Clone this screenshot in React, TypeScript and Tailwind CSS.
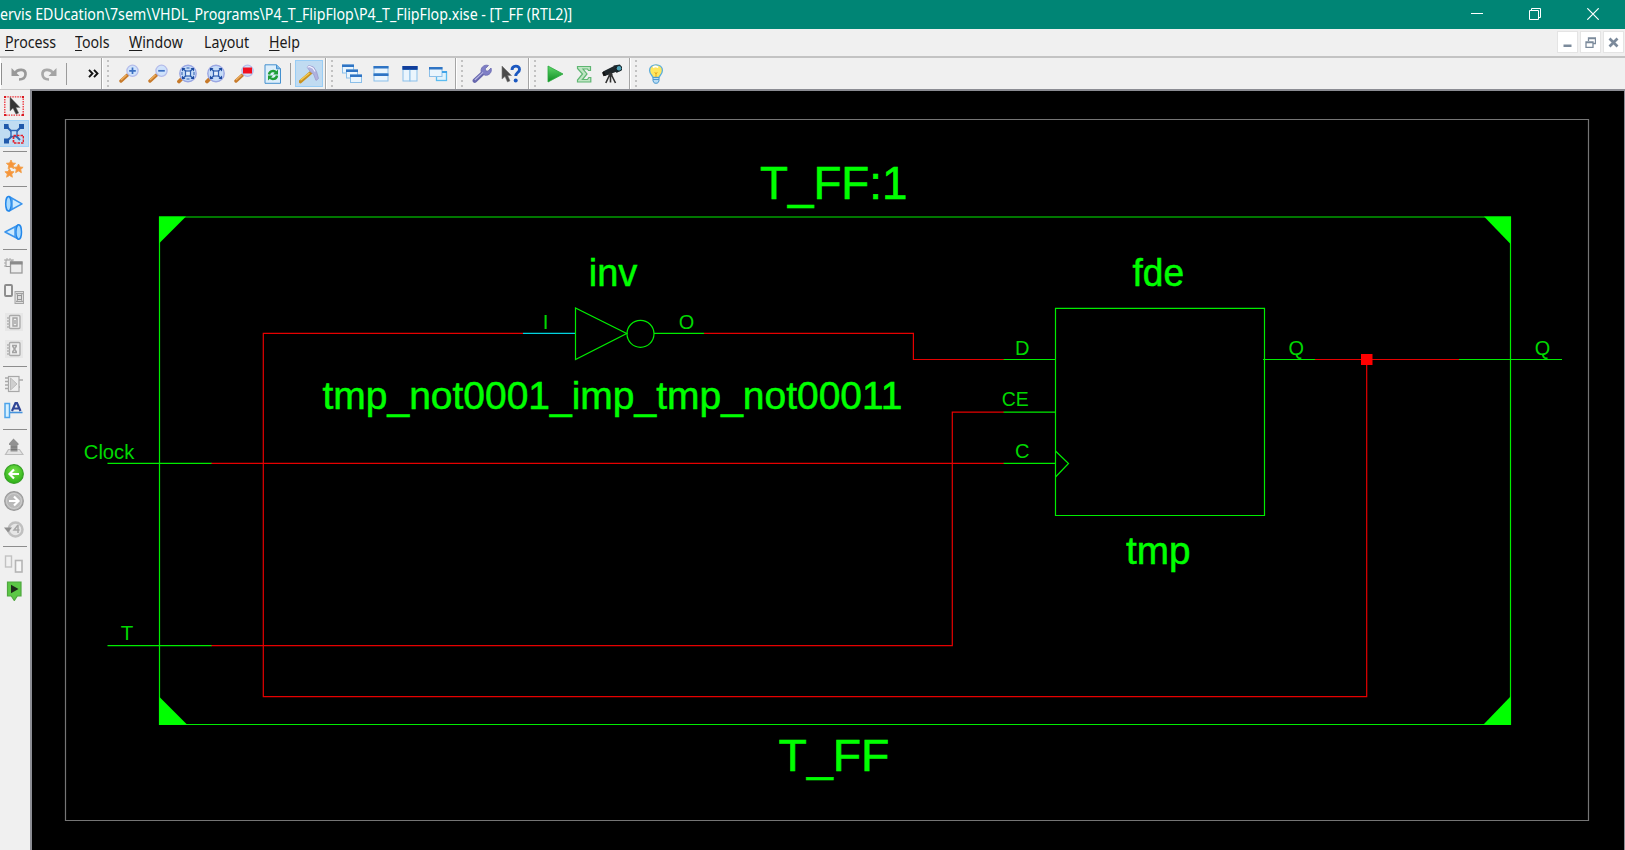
import type { ReactNode } from "react";

/* ---------- shared bits ---------- */

function Icon({ children, size = 20 }: { children: ReactNode; size?: number }) {
  return (
    <svg width={size} height={size} viewBox="0 0 20 20" fill="none" className="block shrink-0">
      {children}
    </svg>
  );
}

function Cell({ children, active = false }: { children: ReactNode; active?: boolean }) {
  return (
    <div
      className={
        active
          ? "flex h-[27px] w-[28px] items-center justify-center border border-[#99cdf5] bg-[#c0dbf1]"
          : "flex h-[27px] w-[28.7px] items-center justify-center"
      }
    >
      {children}
    </div>
  );
}

function Grip() {
  return (
    <div className="flex h-full w-[12px] shrink-0 flex-col items-center justify-center gap-[3px]">
      {[0, 1, 2, 3, 4, 5].map((i) => (
        <span key={i} className="h-[2px] w-[2px] bg-[#c2c2c2]" />
      ))}
    </div>
  );
}

function Section({ width, children }: { width: string; children: ReactNode }) {
  return (
    <div className={`flex h-full shrink-0 items-center border-r border-[#a5a5a5] shadow-[inset_1px_0_0_#ffffff] ${width}`}>
      {children}
    </div>
  );
}

/* ---------- toolbar icons ---------- */

function Lens({ children }: { children?: ReactNode }) {
  return (
    <Icon>
      <path d="M2 17 8.500 11" stroke="#c77a2a" strokeWidth="3.400" strokeLinecap="round" />
      <path d="M2 16 7.500 11" stroke="#eeb05e" strokeWidth="1.200" />
      <circle cx="13.500" cy="6.800" r="5.600" fill="#cfe2fb" stroke="#b4bcea" strokeWidth="1.300" />
      {children}
    </Icon>
  );
}

function FitLens({ dense = false }: { dense?: boolean }) {
  return (
    <Icon>
      <path d="M2 17.500 5 14.500" stroke="#c77a2a" strokeWidth="3.800" strokeLinecap="round" />
      <circle cx="11" cy="9.500" r="8.200" fill="#c6dcf8" stroke="#9aa6e2" strokeWidth="1.400" />
      <path d="M6 4.500 16 14.500M16 4.500 6 14.500" stroke="#2f5fb0" strokeWidth="1.400" />
      <rect x="8.500" y="7" width="5" height="5" fill="#e3effc" stroke="#2f5fb0" strokeWidth="1.200" />
      <path d="M5 4h3.500L5 7.500zM17 4h-3.500L17 7.500zM5 15h3.500L5 11.500zM17 15h-3.500l3.500-3.500z" fill="#1d4c9f" />
      {!dense && <path d="M5 8v3M17 8v3M9.500 4h3M9.500 15h3" stroke="#2f5fb0" />}
    </Icon>
  );
}

const Undo = () => (
  <Icon>
    <path d="M5.500 9.500C9 4 17 5 16.500 10.500C16.200 14 13.500 15.500 10 15.500" stroke="#999" strokeWidth="2.700" />
    <path d="M2.500 4v8h8z" fill="#999" />
  </Icon>
);
const Redo = () => (
  <Icon>
    <path d="M14.500 9.500C11 4 3 5 3.500 10.500C3.800 14 6.500 15.500 10 15.500" stroke="#a8a8a8" strokeWidth="2.700" />
    <path d="M17.500 4v8h-8z" fill="#a3a3a3" />
  </Icon>
);
const Refresh = () => (
  <Icon>
    <path d="M2 .800h11.500l4 4v14.500H2z" fill="#dceefb" stroke="#4591cf" />
    <path d="M13.500.800v4h4" fill="#7fb7e6" stroke="#4591cf" />
    <path d="M6 10.500c.5-4 5.500-4.500 7-2M14 11.500c-.5 4-5.500 4.500-7 2" stroke="#1f9e38" strokeWidth="2.400" />
    <path d="M15 5.500v5h-5zM5 16.500v-5h5z" fill="#1f9e38" />
  </Icon>
);
const Hammer = () => (
  <Icon>
    <path d="M1.500 17.500 12 8.500" stroke="#c9921f" strokeWidth="3.600" strokeLinecap="round" />
    <path d="M1.500 16.300 10.500 9" stroke="#f3cc55" strokeWidth="1.300" />
    <path d="M8 3 10 1.500 14.500 3 17.500 7.500 19.500 14.500 17 16.500 14.500 10 11.500 8z" fill="#b0b2de" stroke="#9a9acb" strokeWidth=".8" />
    <path d="M8.500 3.200 10.500 2.400 14 4.200l2 3.300" stroke="#f2f2ff" strokeWidth="1.200" />
  </Icon>
);

function Win({ x, y, w, h, title = 2.5, fill = "#eaf5fd" }: { x: number; y: number; w: number; h: number; title?: number; fill?: string }) {
  return (
    <g>
      <rect x={x + 0.5} y={y + 0.5} width={w - 1} height={h - 1} fill={fill} stroke="#8bbfe9" />
      <rect x={x} y={y} width={w} height={title} fill="#2f74c4" />
    </g>
  );
}

const Cascade = () => (
  <Icon>
    <Win x={0} y={0.5} w={12} h={9} />
    <Win x={4} y={5.5} w={12} h={9} />
    <Win x={8} y={10.5} w={12} h={8.5} />
  </Icon>
);
const TileH = () => (
  <Icon>
    <Win x={2.5} y={2} w={15} h={8} />
    <Win x={2.5} y={9.5} w={15} h={8} />
  </Icon>
);
const TileV = () => (
  <Icon>
    <Win x={2.5} y={2} w={8} h={15.5} title={4} />
    <Win x={9.5} y={2} w={8} h={15.5} title={4} />
    <path d="M2.500 2h15v3.500h-15z" fill="#123e9b" />
  </Icon>
);
const Layer = () => (
  <Icon>
    <rect x="8.500" y="8" width="10" height="8.500" fill="#dff3fd" stroke="#5bbcf0" strokeWidth="1.300" />
    <Win x={1} y={3} w={13.5} h={10} />
    <path d="M14 8h5" stroke="#42a4e8" strokeWidth="2" />
  </Icon>
);
const Wrench = () => (
  <Icon>
    <path d="M2.800 16.700 11 9" stroke="#6767ad" strokeWidth="4.400" strokeLinecap="round" />
    <path d="M16.500 1.500 13.200 4.800l.5 2 2.300.400 3-3.200c1.500 4-2 8-6 7.200L9.500 9C7.500 4 12 0 16.500 1.500z" fill="#7f7fc6" stroke="#6a6ab0" strokeWidth=".8" />
    <path d="M2.800 16 11 8.400" stroke="#b4b4e4" strokeWidth="1.200" />
  </Icon>
);
const WhatsThis = () => (
  <Icon>
    <path d="M1 2v13l3-2.500 2.500 5.500 2.500-1.200L6.700 11.500H10.500z" fill="#4a4a4a" stroke="#777" strokeWidth=".6" />
    <path d="M11 6c0-5 7.500-5 7.500-.6C18.500 8.500 14.700 8.500 14.700 12" stroke="#1b58c0" strokeWidth="2.900" />
    <circle cx="14.700" cy="16.500" r="2" fill="#1b58c0" />
  </Icon>
);
const Play = () => (
  <Icon>
    <defs>
      <linearGradient id="play" x1="0" y1="0" x2="0" y2="1">
        <stop offset="0" stopColor="#5fd66b" />
        <stop offset="1" stopColor="#0e8d22" />
      </linearGradient>
    </defs>
    <path d="M3 2 18 10 3 18z" fill="url(#play)" stroke="#2aa83c" strokeWidth=".8" />
  </Icon>
);
const Sigma = () => (
  <Icon>
    <path d="M3.500 2.500h13v4h-2l-1-1.500H9l4 5-4.500 5.500h5l1.300-2h2v4.500H3.500v-2l5-6-5-5.500z" fill="#bfe5c3" stroke="#5fb672" strokeWidth="1.200" />
  </Icon>
);
const Scope = () => (
  <Icon>
    <path d="M1 7.500 12 2l3 5.500L3 12z" fill="#20272b" />
    <path d="m0 8.500 2-1 1.800 4-2.300.8z" fill="#111" />
    <path d="M11.500 1.500 18 .5l1.800 5.500-5.300 3z" fill="#1b2429" />
    <circle cx="17" cy="4.300" r="2.800" fill="#4fa3b9" stroke="#152025" />
    <path d="M8.500 9.500v9M8 10 3.800 19M9 10l4.500 9" stroke="#303030" strokeWidth="1.600" />
    <circle cx="8.500" cy="10.500" r="2" fill="#333" />
  </Icon>
);
const Bulb = () => (
  <Icon>
    <path d="M7 13.500C6.500 11.500 3.600 10 3.600 6.500C3.600 3 6.500.800 10 .800s6.400 2.200 6.400 5.700C16.400 10 13.500 11.500 13 13.500z" fill="#ffe75e" stroke="#5badde" strokeWidth="1.300" />
    <path d="M7 3.500c1.500-1.500 4-1.500 5 0" stroke="#fff" strokeWidth="1.800" />
    <path d="M10 8v5M8.500 8.500 10 10l1.500-1.500" stroke="#e7ad24" />
    <path d="M7 13.500h6V17l-1.500 2.200h-3L7 17z" fill="#b9dcf5" stroke="#4b9ad0" />
    <path d="M7 15.500h6" stroke="#4b9ad0" />
  </Icon>
);

/* ---------- side bar icons ---------- */

const Pointer = () => (
  <Icon>
    <rect x=".8" y=".8" width="18.400" height="18.400" stroke="#ee3038" strokeWidth="1.300" strokeDasharray="1.500 1" />
    <path d="M0 0h2v2H0zM18 0h2v2h-2zM0 18h2v2H0zM18 18h2v2h-2z" fill="#d81920" />
    <path d="M6 1v14l3-2.700 3 6 2.700-1.300-2.700-5.500H16z" fill="#333" stroke="#777" strokeWidth=".5" />
  </Icon>
);
const Net = () => (
  <Icon>
    <path d="M3 3 16 16M17 3 3 17" stroke="#2f66b5" strokeWidth="1.900" />
    <path d="M0 0h4.500l.5 5H0zM15 0h5v5h-5zM0 14.500h5v5H0z" fill="#1f59ab" />
    <rect x="7" y="6.500" width="6" height="6" fill="#bddcf7" stroke="#2f66b5" strokeWidth="1.400" />
    <rect x="9.500" y="11.500" width="10" height="7.500" stroke="#e3202b" strokeWidth="1.700" strokeDasharray="2.500 1" />
  </Icon>
);
const STAR = "M0-4.500 1.400-1.500 4.600-1.200 2.200 1 2.900 4.200 0 2.500-2.900 4.200-2.200 1-4.600-1.200-1.400-1.500z";
const Stars = () => (
  <Icon>
    <g fill="#f7953a" stroke="#f2a04c" strokeWidth=".9">
      <path d={STAR} transform="translate(7 5.500)" />
      <path d={STAR} transform="translate(14.500 9.500)" />
      <path d={STAR} transform="translate(5.500 14)" />
    </g>
  </Icon>
);
const ConeRight = () => (
  <Icon>
    <path d="M5 2.500 18 9.800 5 17z" fill="#cdeafe" stroke="#3a94ec" strokeWidth="1.500" strokeLinejoin="round" />
    <ellipse cx="4.500" cy="9.800" rx="2.800" ry="7.200" fill="#a8daff" stroke="#2387ea" strokeWidth="1.500" />
    <path d="M8 4.500v10.500" stroke="#3a94ec" strokeWidth="1.400" />
  </Icon>
);
const ConeLeft = () => (
  <Icon>
    <path d="M14.500 3 1 10l13.500 7z" fill="#cdeafe" stroke="#3a94ec" strokeWidth="1.500" strokeLinejoin="round" />
    <ellipse cx="14.700" cy="10" rx="2.800" ry="7.200" fill="#a8daff" stroke="#2387ea" strokeWidth="1.500" />
    <path d="M11 5v10" stroke="#3a94ec" strokeWidth="1.400" />
  </Icon>
);
const PushWin = () => (
  <Icon>
    <rect x="2" y="3" width="6" height="6.500" stroke="#9a9a9a" />
    <path d="M0 3h2M0 6h2M0 9h2M3 1v2M6 1v2M8 3h2" stroke="#aaa" />
    <rect x="6.500" y="5" width="11.500" height="11" fill="#ededed" stroke="#9b9b9b" strokeWidth="1.300" />
    <path d="M6 4.500h12.500v3H6z" fill="#8b8b8b" />
  </Icon>
);
const PopWin = () => (
  <Icon>
    <rect x="1" y="1" width="7" height="11" rx="1" fill="#f2f2f2" stroke="#8b8b8b" strokeWidth="1.900" />
    <rect x="11" y="7.500" width="8.500" height="12" fill="#ddd" stroke="#a5a5a5" />
    <path d="m12.500 9.500 6 8M18.500 9.500l-6 8M12 9.500h7M12 17.500h7" stroke="#a0a0a0" />
    <rect x="13.500" y="11.500" width="4" height="4" fill="#ddd" stroke="#969696" />
  </Icon>
);
const Chip = ({ inner }: { inner: string }) => (
  <Icon>
    <path d="M1 1h18v18H1z" fill="#e7e7e7" />
    <rect x="5.500" y="3.500" width="10.500" height="13" rx="1" fill="#eee" stroke="#a9a9a9" strokeWidth="1.300" />
    <path d="M3 6h3M3 9h3M3 12h3M3 15h3" stroke="#b4b4b4" strokeWidth="1.300" />
    <path d={inner} stroke="#a3a3a3" strokeWidth="1.400" />
  </Icon>
);
const ChipPins = () => (
  <Icon>
    <rect x="4.500" y="2.500" width="10.500" height="15" fill="#eee" stroke="#a8a8a8" strokeWidth="1.200" />
    <path d="M6.500 4 13 10l-6.500 6z" fill="#cfcfcf" stroke="#bababa" />
    <path d="M1 4h4M1 7.500h4M1 11h4M1 14.500h4M15 6h4M15 13h1" stroke="#a9a9a9" strokeWidth="1.600" />
  </Icon>
);
const NameLabel = () => (
  <Icon>
    <rect x="1" y="2.500" width="4.500" height="14" fill="#d5f0ff" stroke="#4da4ea" strokeWidth="1.500" />
    <path d="M6 11.500h12.500" stroke="#4593dd" strokeWidth="1.600" />
    <path d="m8 10 3.500-8h1.500l3.500 8M9.500 7.500H15" stroke="#2f4596" strokeWidth="2.200" />
  </Icon>
);
const PopUp = () => (
  <Icon>
    <path d="M4.500 12.500h11l3.500 5H1.500z" fill="#e3e3e3" stroke="#bdbdbd" strokeWidth="1.200" />
    <path d="m9.500 1.500 5 5V8h-1v6.500h-7V8H5V6.500z" fill="#929292" />
    <path d="M7 10h6M7 12.500h6" stroke="#777" />
  </Icon>
);
const Back = () => (
  <Icon>
    <defs>
      <radialGradient id="back" cx=".5" cy=".35" r=".6">
        <stop offset="0" stopColor="#78e34c" />
        <stop offset="1" stopColor="#33b41b" />
      </radialGradient>
    </defs>
    <circle cx="10" cy="10" r="9.300" fill="url(#back)" stroke="#36a025" strokeWidth="1.200" />
    <path d="M15 10H6M10 5.500 5.500 10l4.500 4.500" stroke="#fff" strokeWidth="2.200" />
  </Icon>
);
const Forward = () => (
  <Icon>
    <circle cx="10" cy="10" r="9.300" fill="#b9b9b9" stroke="#999" strokeWidth="1.200" />
    <circle cx="10" cy="10" r="7.500" stroke="#cecece" />
    <path d="M5 10h9M10 5.500l4.500 4.500-4.500 4.500" stroke="#fff" strokeWidth="2.200" />
  </Icon>
);
const History = () => (
  <Icon>
    <circle cx="11.500" cy="10.500" r="7" fill="#e6e6e6" stroke="#c0c0c0" strokeWidth="2.500" />
    <path d="M0 8.500h8L4 13.500z" fill="#8f8f8f" />
    <path d="M14 6 10 11h5.500M14 6v8" stroke="#a8a8a8" strokeWidth="1.500" />
  </Icon>
);
const Pair = () => (
  <Icon>
    <rect x="1.500" y="2" width="6" height="11" fill="#f1f1f1" stroke="#c2c2c2" strokeWidth="1.400" />
    <rect x="11.500" y="6.500" width="6.500" height="11.500" fill="#f7f7f7" stroke="#b5b5b5" strokeWidth="1.600" />
  </Icon>
);
const PinGo = () => (
  <Icon>
    <path d="M3.500 1h13.500v14h-3.700L10.300 19.500l-3-4.500H3.500z" fill="#5cc846" stroke="#4fa740" strokeWidth="1.200" />
    <path d="m7 3.700 7.500 4.200L7 12.200z" fill="#1d2b1a" />
  </Icon>
);

function Side({ children, active = false }: { children: ReactNode; active?: boolean }) {
  return (
    <div
      className={
        active
          ? "flex h-[27.3px] w-[29px] items-center justify-center border-y border-r border-[#a4d2f6] bg-[#c0dcf2]"
          : "flex h-[27.3px] w-[28px] items-center justify-center"
      }
    >
      {children}
    </div>
  );
}

function Rule() {
  return (
    <div className="flex h-[8px] w-[29px] items-center justify-center">
      <div className="h-px w-[24px] bg-[#8d8d8d]" />
    </div>
  );
}

/* ---------- schematic ---------- */

function Label({ x, y, w, size, children }: { x: number; y: number; w?: number; size: number; children: string }) {
  return (
    <text x={x} y={y} fontSize={size} textLength={w} lengthAdjust="spacingAndGlyphs" className="font-['Liberation_Sans',sans-serif]">
      {children}
    </text>
  );
}

function Schematic() {
  return (
    <svg viewBox="32 91 1592 759" width="1592" height="759" fill="none" className="block">
      <path d="M65.500 119.500H1588.500V820.500H65.500z" stroke="#757575" strokeWidth="1.200" />

      <g stroke="#e60000" strokeWidth="1.200">
        <path d="M523 333.400H263.300V696.700H1366.700V359.500" />
        <path d="M704 333.400H913.400V359.500H1004" />
        <path d="M211 463.400H1004" />
        <path d="M211 645.600H952.300V412.200H1004" />
        <path d="M1315 359.500H1460" />
      </g>
      <path d="M523 333.400H575.500" stroke="#00d4e0" strokeWidth="1.400" />

      <g stroke="#00ec00" strokeWidth="1.200">
        <path d="M159.500 217H1510.500V724.500H159.500z" />
        <path d="M575.500 308V359.500L626.700 333.500z" />
        <circle cx="640.500" cy="333.800" r="13.500" />
        <path d="M654 333.400H704" />
        <path d="M1055.500 308.300H1264.500V515.500H1055.500z" />
        <path d="M1055.500 451 1068.500 463.500 1055.500 477" />
        <path d="M1003.700 359.500H1055.500M1003.700 412.200H1055.500M1003.700 463.400H1055.500" />
        <path d="M1263 359.500H1315M1459 359.500H1562" />
        <path d="M107.500 463.400H211.500M107.500 645.600H211.500" />
      </g>

      <g fill="#00ff00">
        <path d="M159 216.500H186L159 243.500z" />
        <path d="M1511 216.500H1484L1511 244.500z" />
        <path d="M159 725V696.500L187.500 725z" />
        <path d="M1511 725V696L1483 725z" />
      </g>
      <path d="M1361 354h11.500v11h-11.500z" fill="#ff0000" />

      <g fill="#00ff00" stroke="#00ff00" strokeWidth=".5">
        <Label x={760} y={199} size={45.5} w={147.5}>T_FF:1</Label>
        <Label x={778.5} y={771} size={45} w={111}>T_FF</Label>
        <Label x={588.8} y={285.6} size={38}>inv</Label>
        <Label x={1132.5} y={285.6} size={38} w={51.5}>fde</Label>
        <Label x={1126} y={564} size={38} w={64.5}>tmp</Label>
        <Label x={322.5} y={408.8} size={38} w={580}>tmp_not0001_imp_tmp_not00011</Label>
      </g>
      <g fill="#00d800">
        <Label x={83.8} y={458.6} size={20.5} w={50.5}>Clock</Label>
        <Label x={120.7} y={639.8} size={20.5}>T</Label>
        <Label x={542.7} y={328.5} size={20.5}>I</Label>
        <Label x={678.7} y={328.5} size={20.5} w={15.5}>O</Label>
        <Label x={1015} y={355.1} size={20.5} w={14.5}>D</Label>
        <Label x={1001.8} y={405.8} size={20.5} w={27}>CE</Label>
        <Label x={1015} y={458.3} size={20.5} w={14.5}>C</Label>
        <Label x={1288.5} y={355.1} size={20.5} w={15.5}>Q</Label>
        <Label x={1534.7} y={355.1} size={20.5} w={15.5}>Q</Label>
      </g>
    </svg>
  );
}

/* ---------- window ---------- */

const MENUS = [
  { pre: "", key: "P", post: "rocess", width: "w-[70px]" },
  { pre: "", key: "T", post: "ools", width: "w-[54px]" },
  { pre: "", key: "W", post: "indow", width: "w-[75px]" },
  { pre: "La", key: "y", post: "out", width: "w-[65px]" },
  { pre: "", key: "H", post: "elp", width: "w-[60px]" },
];

export default function App() {
  return (
    <div className="flex h-[850px] w-[1625px] flex-col overflow-hidden bg-[#f0f0f0] font-['Noto_Sans',sans-serif]">
      <header className="flex h-[29px] shrink-0 items-center justify-between bg-[#008575] text-white">
        <span className="origin-left scale-x-[0.915] text-[15.5px] leading-[29px] whitespace-pre">
          {"ervis EDUcation\\7sem\\VHDL_Programs\\P4_T_FlipFlop\\P4_T_FlipFlop.xise - [T_FF (RTL2)]"}
        </span>
        <div className="flex items-center gap-[46px] pr-[26px] pb-px">
          <svg width="12" height="12" fill="none" stroke="#fff"><path d="M0 5.500h12" /></svg>
          <svg width="12" height="12" fill="none" stroke="#fff"><path d="M.5 2.500h9v9h-9zM2.500 2.500v-2h9v9h-2" /></svg>
          <svg width="12" height="12" fill="none" stroke="#fff" strokeWidth="1.200"><path d="m.3.300 11.400 11.400M11.700.300.300 11.700" /></svg>
        </div>
      </header>

      <nav className="flex h-[27px] shrink-0 items-center justify-between">
        <div className="flex pl-[5px] text-[15.5px] leading-[25px] text-[#1a1a1a]">
          {MENUS.map((m) => (
            <span key={m.key} className={m.width}>
              <span className="inline-block origin-left scale-x-[0.915]">
                {m.pre}
                <span className="underline underline-offset-2">{m.key}</span>
                {m.post}
              </span>
            </span>
          ))}
        </div>
        <div className="flex gap-[2px] pr-px pb-px">
          <div className="flex h-[22px] w-[21px] items-center justify-center border border-[#e4e4e4] bg-white">
            <svg width="11" height="11"><path d="M1.500 7.500h8v2.500h-8z" fill="#7b8a9b" /></svg>
          </div>
          <div className="flex h-[22px] w-[21px] items-center justify-center border border-[#e4e4e4] bg-white">
            <svg width="11" height="11" fill="none" stroke="#7b8a9b">
              <path d="M3.500 4V1h7v5.500H8M3 1.500h8M1 5h7v5.500H1zM1 5.700h7" strokeWidth="1.300" />
            </svg>
          </div>
          <div className="flex h-[22px] w-[21px] items-center justify-center border border-[#e4e4e4] bg-white">
            <svg width="11" height="11" fill="none" stroke="#7b8a9b"><path d="m1.500 1.500 8 8M9.500 1.500l-8 8" strokeWidth="2.700" /></svg>
          </div>
        </div>
      </nav>

      <div className="flex h-[33px] shrink-0 items-center border-t-2 border-[#c3c3c3]">
        <Section width="w-[102px]">
          <div className="ml-px h-[22px] w-px bg-[#8f8f8f]" />
          <div className="flex gap-[1px] pl-[3px]">
            <Cell><Undo /></Cell>
            <Cell><Redo /></Cell>
          </div>
          <div className="ml-[3px] h-[22px] w-px bg-[#9b9b9b]" />
          <svg width="11" height="9" viewBox="0 0 11 9" fill="none" stroke="#111" strokeWidth="1.900" className="ml-[21px]">
            <path d="m1 .8 3.500 3.700L1 8.200M6 .8l3.500 3.700L6 8.200" />
          </svg>
        </Section>
        <Section width="w-[224px]">
          <Grip />
          <div className="flex pl-px">
            <Cell><Lens><path d="M10.200 6.800h6.600M13.500 3.500v6.600" stroke="#3c70c2" strokeWidth="1.700" /></Lens></Cell>
            <Cell><Lens><path d="M10.200 6.800h6.600" stroke="#3c70c2" strokeWidth="1.700" /></Lens></Cell>
            <Cell><FitLens /></Cell>
            <Cell><FitLens dense /></Cell>
            <Cell><Lens><path d="M9 3.500h9v6H9z" fill="#f20f20" /></Lens></Cell>
            <Cell><Refresh /></Cell>
          </div>
          <div className="mr-[4px] ml-[3px] h-[22px] w-px bg-[#9b9b9b]" />
          <Cell active><Hammer /></Cell>
        </Section>
        <Section width="w-[129.5px]">
          <Grip />
          <Cell><Cascade /></Cell>
          <Cell><TileH /></Cell>
          <Cell><TileV /></Cell>
          <Cell><Layer /></Cell>
        </Section>
        <Section width="w-[73px]">
          <Grip />
          <Cell><Wrench /></Cell>
          <Cell><WhatsThis /></Cell>
        </Section>
        <Section width="w-[101px]">
          <Grip />
          <Cell><Play /></Cell>
          <Cell><Sigma /></Cell>
          <Cell><Scope /></Cell>
        </Section>
        <div className="flex h-full items-center shadow-[inset_1px_0_0_#ffffff]">
          <Grip />
          <Cell><Bulb /></Cell>
        </div>
      </div>

      <main className="flex min-h-0 flex-1">
        <aside className="flex w-[30px] shrink-0 flex-col border-t border-[#c8c8c8] pt-[2.800px]">
          <Side><Pointer /></Side>
          <Side active><Net /></Side>
          <Rule />
          <Side><Stars /></Side>
          <Rule />
          <Side><ConeRight /></Side>
          <Side><ConeLeft /></Side>
          <Rule />
          <Side><PushWin /></Side>
          <Side><PopWin /></Side>
          <Side><Chip inner="M9 6h4v8H9zM11 8v4" /></Side>
          <Side><Chip inner="M8 6.500h5M8 13.500h5M8.500 7l4 6M12.500 7l-4 6" /></Side>
          <Rule />
          <Side><ChipPins /></Side>
          <Side><NameLabel /></Side>
          <Rule />
          <Side><PopUp /></Side>
          <Side><Back /></Side>
          <Side><Forward /></Side>
          <Side><History /></Side>
          <Rule />
          <Side><Pair /></Side>
          <Side><PinGo /></Side>
        </aside>
        <div className="border-t-2 border-r border-l-2 border-[#8b8c93] bg-black">
          <Schematic />
        </div>
      </main>
    </div>
  );
}
